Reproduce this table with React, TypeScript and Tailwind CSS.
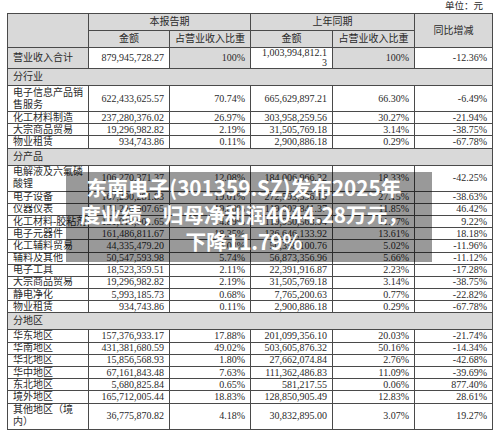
import React from "react";

type Row = {
  label: React.ReactNode;
  cur: React.ReactNode;
  curPct: string;
  prev: React.ReactNode;
  prevPct: string;
  diff: string;
  tall?: boolean;
};

type Section = { title: string; rows: Row[] };

const sections: Section[] = [
  {
    title: "分行业",
    rows: [
      { label: <>电子信息产品销<br />售服务</>, cur: "622,433,625.57", curPct: "70.74%", prev: "665,629,897.21", prevPct: "66.30%", diff: "-6.49%", tall: true },
      { label: "化工材料制造", cur: "237,280,376.02", curPct: "26.97%", prev: "303,958,259.56", prevPct: "30.27%", diff: "-21.94%" },
      { label: "大宗商品贸易", cur: "19,296,982.82", curPct: "2.19%", prev: "31,505,769.18", prevPct: "3.14%", diff: "-38.75%" },
      { label: "物业租赁", cur: "934,743.86", curPct: "0.11%", prev: "2,900,886.18", prevPct: "0.29%", diff: "-67.78%" },
    ],
  },
  {
    title: "分产品",
    rows: [
      { label: <>电解液及六氟磷<br />酸锂</>, cur: "106,270,371.37", curPct: "12.08%", prev: "184,006,966.32", prevPct: "18.33%", diff: "-42.25%", tall: true },
      { label: "电子设备", cur: "167,290,281.83", curPct: "19.01%", prev: "272,593,596.19", prevPct: "27.15%", diff: "-38.63%" },
      { label: "仪器仪表", cur: "174,246,907.65", curPct: "19.80%", prev: "119,003,841.37", prevPct: "11.85%", diff: "46.42%" },
      { label: "化工材料-胶粘剂", cur: "131,010,001.65", curPct: "14.89%", prev: "119,950,563.94", prevPct: "11.97%", diff: "9.22%" },
      { label: "电子元器件", cur: "161,486,811.67", curPct: "18.35%", prev: "136,646,133.92", prevPct: "13.61%", diff: "18.18%" },
      { label: "化工辅料贸易", cur: "44,335,479.20", curPct: "5.04%", prev: "50,358,100.76", prevPct: "5.02%", diff: "-11.96%" },
      { label: "辅料及其他", cur: "50,547,593.98", curPct: "5.74%", prev: "56,873,356.96", prevPct: "5.66%", diff: "-11.12%" },
      { label: "电子工具", cur: "18,523,359.51", curPct: "2.11%", prev: "22,391,916.87", prevPct: "2.23%", diff: "-17.28%" },
      { label: "大宗商品贸易", cur: "19,296,982.82", curPct: "2.19%", prev: "31,505,769.18", prevPct: "3.14%", diff: "-38.75%" },
      { label: "静电净化", cur: "5,993,185.73", curPct: "0.68%", prev: "7,765,200.63", prevPct: "0.77%", diff: "-22.82%" },
      { label: "物业租赁", cur: "934,743.86", curPct: "0.11%", prev: "2,900,886.18", prevPct: "0.29%", diff: "-67.78%" },
    ],
  },
  {
    title: "分地区",
    rows: [
      { label: "华东地区", cur: "157,376,933.17", curPct: "17.88%", prev: "201,099,356.10", prevPct: "20.03%", diff: "-21.74%" },
      { label: "华南地区", cur: "431,381,680.59", curPct: "49.02%", prev: "503,605,876.32", prevPct: "50.16%", diff: "-14.34%" },
      { label: "华北地区", cur: "15,856,568.93", curPct: "1.80%", prev: "27,662,074.84", prevPct: "2.76%", diff: "-42.68%" },
      { label: "华中地区", cur: "67,161,843.48", curPct: "7.63%", prev: "111,362,486.83", prevPct: "11.09%", diff: "-39.69%" },
      { label: "东北地区", cur: "5,680,825.84", curPct: "0.65%", prev: "581,217.55", prevPct: "0.06%", diff: "877.40%" },
      { label: "境外地区", cur: "165,712,005.44", curPct: "18.83%", prev: "128,850,905.49", prevPct: "12.83%", diff: "28.61%" },
      { label: <>其他地区（境<br />内）</>, cur: "36,775,870.82", curPct: "4.18%", prev: "30,832,895.00", prevPct: "3.07%", diff: "19.27%", tall: true },
    ],
  },
];

const td = "border border-[#4a4a4a] p-0 align-middle";
const num = `${td} text-right pr-[5px]`;
const lab = `${td} text-left pl-[5px] whitespace-nowrap overflow-hidden`;

const App = () => {
  return (
    <div className="relative w-[500px] h-[435px] bg-white overflow-hidden text-[#2a2a2a] font-['Liberation_Serif','Noto_Sans_CJK_SC',serif] text-[10px] leading-[10px]">
      <div className="h-[13px] text-right pr-[17px] pt-[1px] text-[9.5px] leading-[11px]">单位：元</div>

      <table className="ml-[7px] table-fixed border-collapse w-[485px]">
        <colgroup>
          <col className="w-[81px]" />
          <col className="w-[81px]" />
          <col className="w-[81px]" />
          <col className="w-[82px]" />
          <col className="w-[82px]" />
          <col className="w-[78px]" />
        </colgroup>
        <tbody>
          <tr className="h-[17px] bg-[#d9d9d9]">
            <td className={td} rowSpan={2}></td>
            <td className={`${td} text-center`} colSpan={2}>本报告期</td>
            <td className={`${td} text-center`} colSpan={2}>上年同期</td>
            <td className={`${td} text-center`} rowSpan={2}>同比增减</td>
          </tr>
          <tr className="h-[17px] bg-[#d9d9d9]">
            <td className={`${td} text-center`}>金额</td>
            <td className={`${td} text-center`}>占营业收入比重</td>
            <td className={`${td} text-center`}>金额</td>
            <td className={`${td} text-center`}>占营业收入比重</td>
          </tr>
          <tr className="h-[21px]">
            <td className={`${lab} bg-[#d9d9d9]`}>营业收入合计</td>
            <td className={num}>879,945,728.27</td>
            <td className={`${num} bg-[#d9d9d9]`}>100%</td>
            <td className={`${num} pl-[4px] leading-[10px]`}>1,003,994,812.1<br />3</td>
            <td className={`${num} bg-[#d9d9d9]`}>100%</td>
            <td className={num}>-12.36%</td>
          </tr>
          {sections.map((s) => (
            <React.Fragment key={s.title}>
              <tr className="h-[17px] bg-[#d9d9d9]">
                <td className={`${td} text-left pl-[5px]`} colSpan={6}>{s.title}</td>
              </tr>
              {s.rows.map((r, i) => (
                <tr key={i} className={r.tall ? "h-[26px]" : "h-[12.2px]"}>
                  <td className={r.tall ? `${td} text-left pl-[5px] leading-[12px]` : lab}>{r.label}</td>
                  <td className={num}>{r.cur}</td>
                  <td className={num}>{r.curPct}</td>
                  <td className={num}>{r.prev}</td>
                  <td className={num}>{r.prevPct}</td>
                  <td className={num}>{r.diff}</td>
                </tr>
              ))}
            </React.Fragment>
          ))}
        </tbody>
      </table>

      {/* 标题浮层 */}
      <div className="absolute left-[66px] top-[172px] w-[366px] h-[90px] bg-black/40 flex flex-col items-center pt-[2px] pr-[10px] text-white font-bold font-['Noto_Sans_CJK_SC',sans-serif] text-[20.7px] leading-[27px]">
        <p>东南电子(301359.SZ)发布2025年</p>
        <p>度业绩，归母净利润4044.28万元，</p>
        <p>下降11.79%</p>
      </div>
    </div>
  );
};

export default App;
